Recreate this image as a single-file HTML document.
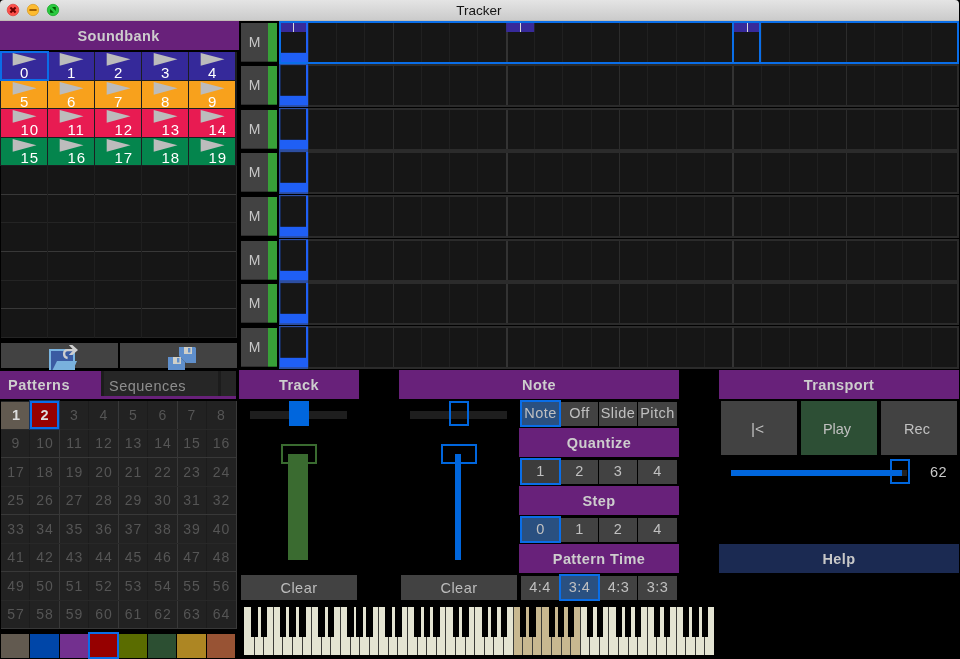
<!DOCTYPE html><html><head><meta charset="utf-8"><style>
html,body{margin:0;padding:0;width:960px;height:659px;overflow:hidden;background:#000;}
.a{position:absolute;box-sizing:border-box;}
.t{font-family:"Liberation Sans",sans-serif;white-space:nowrap;}
</style></head><body><div class="a" style="left:0;top:0;width:960px;height:659px;will-change:transform;background:#000;overflow:hidden">
<div class="a" style="left:0px;top:0px;width:959px;height:21px;background:linear-gradient(#e4e4e4,#cbcbcb);border-bottom:1px solid #c0bcb6;border-top-right-radius:4px;border-top-left-radius:4px;"></div>
<div class="a t" style="left:-1px;top:1px;width:960px;height:20px;line-height:20px;font-size:13.5px;font-weight:normal;color:#151515;text-align:center;">Tracker</div>
<svg class="a" style="left:0;top:0" width="70" height="21">
<circle cx="13" cy="10" r="5.8" fill="#fd4f4b" stroke="#df4540" stroke-width="0.8"/>
<path d="M10.4 7.4 L15.6 12.6 M15.6 7.4 L10.4 12.6" stroke="#6a0000" stroke-width="2.1"/>
<circle cx="33" cy="10" r="5.7" fill="#fdbb2f" stroke="#dd9e24" stroke-width="0.8"/>
<path d="M29.4 10 L36.6 10" stroke="#985600" stroke-width="1.8"/>
<circle cx="53" cy="10" r="5.7" fill="#2ac940" stroke="#1aab2a" stroke-width="0.8"/>
<path d="M52 7.1 L55.8 7.1 L55.8 10.9 Z M50.1 8.9 L50.1 12.8 L53.9 12.8 Z" fill="#035e00"/>
</svg>
<div class="a" style="left:0px;top:21px;width:239px;height:29px;background:#68217a;"></div>
<div class="a t" style="left:0px;top:22px;width:237px;height:29px;line-height:29px;font-size:14.5px;font-weight:bold;color:#cdcdcd;text-align:center;letter-spacing:0.35px;">Soundbank</div>
<div class="a" style="left:0px;top:52px;width:237px;height:114px;background:#1c1e21;"></div>
<div class="a" style="left:1px;top:52px;width:46px;height:28px;background:#35299a;"></div>
<svg class="a" style="left:1px;top:53.3px" width="47" height="14"><path d="M11.7 0 L35.5 6.35 L11.7 12.7 Z" fill="#bcbcbc"/></svg>
<div class="a t" style="left:20px;top:66px;width:30px;height:13px;line-height:13px;font-size:15px;font-weight:normal;color:#ffffff;text-align:left;">0</div>
<div class="a" style="left:48px;top:52px;width:46px;height:28px;background:#35299a;"></div>
<svg class="a" style="left:48px;top:53.3px" width="47" height="14"><path d="M11.7 0 L35.5 6.35 L11.7 12.7 Z" fill="#bcbcbc"/></svg>
<div class="a t" style="left:67px;top:66px;width:30px;height:13px;line-height:13px;font-size:15px;font-weight:normal;color:#ffffff;text-align:left;">1</div>
<div class="a" style="left:95px;top:52px;width:46px;height:28px;background:#35299a;"></div>
<svg class="a" style="left:95px;top:53.3px" width="47" height="14"><path d="M11.7 0 L35.5 6.35 L11.7 12.7 Z" fill="#bcbcbc"/></svg>
<div class="a t" style="left:114px;top:66px;width:30px;height:13px;line-height:13px;font-size:15px;font-weight:normal;color:#ffffff;text-align:left;">2</div>
<div class="a" style="left:142px;top:52px;width:46px;height:28px;background:#35299a;"></div>
<svg class="a" style="left:142px;top:53.3px" width="47" height="14"><path d="M11.7 0 L35.5 6.35 L11.7 12.7 Z" fill="#bcbcbc"/></svg>
<div class="a t" style="left:161px;top:66px;width:30px;height:13px;line-height:13px;font-size:15px;font-weight:normal;color:#ffffff;text-align:left;">3</div>
<div class="a" style="left:189px;top:52px;width:46px;height:28px;background:#35299a;"></div>
<svg class="a" style="left:189px;top:53.3px" width="47" height="14"><path d="M11.7 0 L35.5 6.35 L11.7 12.7 Z" fill="#bcbcbc"/></svg>
<div class="a t" style="left:208px;top:66px;width:30px;height:13px;line-height:13px;font-size:15px;font-weight:normal;color:#ffffff;text-align:left;">4</div>
<div class="a" style="left:1px;top:81px;width:46px;height:27px;background:#f8a11c;"></div>
<svg class="a" style="left:1px;top:81.5px" width="47" height="14"><path d="M11.7 0 L35.5 6.35 L11.7 12.7 Z" fill="#bcbcbc"/></svg>
<div class="a t" style="left:20px;top:94.6px;width:30px;height:13px;line-height:13px;font-size:15px;font-weight:normal;color:#ffffff;text-align:left;">5</div>
<div class="a" style="left:48px;top:81px;width:46px;height:27px;background:#f8a11c;"></div>
<svg class="a" style="left:48px;top:81.5px" width="47" height="14"><path d="M11.7 0 L35.5 6.35 L11.7 12.7 Z" fill="#bcbcbc"/></svg>
<div class="a t" style="left:67px;top:94.6px;width:30px;height:13px;line-height:13px;font-size:15px;font-weight:normal;color:#ffffff;text-align:left;">6</div>
<div class="a" style="left:95px;top:81px;width:46px;height:27px;background:#f8a11c;"></div>
<svg class="a" style="left:95px;top:81.5px" width="47" height="14"><path d="M11.7 0 L35.5 6.35 L11.7 12.7 Z" fill="#bcbcbc"/></svg>
<div class="a t" style="left:114px;top:94.6px;width:30px;height:13px;line-height:13px;font-size:15px;font-weight:normal;color:#ffffff;text-align:left;">7</div>
<div class="a" style="left:142px;top:81px;width:46px;height:27px;background:#f8a11c;"></div>
<svg class="a" style="left:142px;top:81.5px" width="47" height="14"><path d="M11.7 0 L35.5 6.35 L11.7 12.7 Z" fill="#bcbcbc"/></svg>
<div class="a t" style="left:161px;top:94.6px;width:30px;height:13px;line-height:13px;font-size:15px;font-weight:normal;color:#ffffff;text-align:left;">8</div>
<div class="a" style="left:189px;top:81px;width:46px;height:27px;background:#f8a11c;"></div>
<svg class="a" style="left:189px;top:81.5px" width="47" height="14"><path d="M11.7 0 L35.5 6.35 L11.7 12.7 Z" fill="#bcbcbc"/></svg>
<div class="a t" style="left:208px;top:94.6px;width:30px;height:13px;line-height:13px;font-size:15px;font-weight:normal;color:#ffffff;text-align:left;">9</div>
<div class="a" style="left:1px;top:109px;width:46px;height:28px;background:#e81b52;"></div>
<svg class="a" style="left:1px;top:110px" width="47" height="14"><path d="M11.7 0 L35.5 6.35 L11.7 12.7 Z" fill="#bcbcbc"/></svg>
<div class="a t" style="left:20.6px;top:122.7px;width:30px;height:13px;line-height:13px;font-size:15px;font-weight:normal;color:#ffffff;text-align:left;letter-spacing:0.8px;">10</div>
<div class="a" style="left:48px;top:109px;width:46px;height:28px;background:#e81b52;"></div>
<svg class="a" style="left:48px;top:110px" width="47" height="14"><path d="M11.7 0 L35.5 6.35 L11.7 12.7 Z" fill="#bcbcbc"/></svg>
<div class="a t" style="left:67.6px;top:122.7px;width:30px;height:13px;line-height:13px;font-size:15px;font-weight:normal;color:#ffffff;text-align:left;letter-spacing:0.8px;">11</div>
<div class="a" style="left:95px;top:109px;width:46px;height:28px;background:#e81b52;"></div>
<svg class="a" style="left:95px;top:110px" width="47" height="14"><path d="M11.7 0 L35.5 6.35 L11.7 12.7 Z" fill="#bcbcbc"/></svg>
<div class="a t" style="left:114.6px;top:122.7px;width:30px;height:13px;line-height:13px;font-size:15px;font-weight:normal;color:#ffffff;text-align:left;letter-spacing:0.8px;">12</div>
<div class="a" style="left:142px;top:109px;width:46px;height:28px;background:#e81b52;"></div>
<svg class="a" style="left:142px;top:110px" width="47" height="14"><path d="M11.7 0 L35.5 6.35 L11.7 12.7 Z" fill="#bcbcbc"/></svg>
<div class="a t" style="left:161.6px;top:122.7px;width:30px;height:13px;line-height:13px;font-size:15px;font-weight:normal;color:#ffffff;text-align:left;letter-spacing:0.8px;">13</div>
<div class="a" style="left:189px;top:109px;width:46px;height:28px;background:#e81b52;"></div>
<svg class="a" style="left:189px;top:110px" width="47" height="14"><path d="M11.7 0 L35.5 6.35 L11.7 12.7 Z" fill="#bcbcbc"/></svg>
<div class="a t" style="left:208.6px;top:122.7px;width:30px;height:13px;line-height:13px;font-size:15px;font-weight:normal;color:#ffffff;text-align:left;letter-spacing:0.8px;">14</div>
<div class="a" style="left:1px;top:138px;width:46px;height:27px;background:#04854d;"></div>
<svg class="a" style="left:1px;top:138.5px" width="47" height="14"><path d="M11.7 0 L35.5 6.35 L11.7 12.7 Z" fill="#bcbcbc"/></svg>
<div class="a t" style="left:20.6px;top:150.8px;width:30px;height:13px;line-height:13px;font-size:15px;font-weight:normal;color:#ffffff;text-align:left;letter-spacing:0.8px;">15</div>
<div class="a" style="left:48px;top:138px;width:46px;height:27px;background:#04854d;"></div>
<svg class="a" style="left:48px;top:138.5px" width="47" height="14"><path d="M11.7 0 L35.5 6.35 L11.7 12.7 Z" fill="#bcbcbc"/></svg>
<div class="a t" style="left:67.6px;top:150.8px;width:30px;height:13px;line-height:13px;font-size:15px;font-weight:normal;color:#ffffff;text-align:left;letter-spacing:0.8px;">16</div>
<div class="a" style="left:95px;top:138px;width:46px;height:27px;background:#04854d;"></div>
<svg class="a" style="left:95px;top:138.5px" width="47" height="14"><path d="M11.7 0 L35.5 6.35 L11.7 12.7 Z" fill="#bcbcbc"/></svg>
<div class="a t" style="left:114.6px;top:150.8px;width:30px;height:13px;line-height:13px;font-size:15px;font-weight:normal;color:#ffffff;text-align:left;letter-spacing:0.8px;">17</div>
<div class="a" style="left:142px;top:138px;width:46px;height:27px;background:#04854d;"></div>
<svg class="a" style="left:142px;top:138.5px" width="47" height="14"><path d="M11.7 0 L35.5 6.35 L11.7 12.7 Z" fill="#bcbcbc"/></svg>
<div class="a t" style="left:161.6px;top:150.8px;width:30px;height:13px;line-height:13px;font-size:15px;font-weight:normal;color:#ffffff;text-align:left;letter-spacing:0.8px;">18</div>
<div class="a" style="left:189px;top:138px;width:46px;height:27px;background:#04854d;"></div>
<svg class="a" style="left:189px;top:138.5px" width="47" height="14"><path d="M11.7 0 L35.5 6.35 L11.7 12.7 Z" fill="#bcbcbc"/></svg>
<div class="a t" style="left:208.6px;top:150.8px;width:30px;height:13px;line-height:13px;font-size:15px;font-weight:normal;color:#ffffff;text-align:left;letter-spacing:0.8px;">19</div>
<div class="a" style="left:0px;top:51px;width:49px;height:30px;border:2px solid #0a6ee8;"></div>
<div class="a" style="left:1px;top:166px;width:236px;height:172px;background:#161616;"></div>
<div class="a" style="left:1px;top:194px;width:236px;height:1px;background:#383838;"></div>
<div class="a" style="left:1px;top:222px;width:236px;height:1px;background:#242424;"></div>
<div class="a" style="left:1px;top:251px;width:236px;height:1px;background:#383838;"></div>
<div class="a" style="left:1px;top:280px;width:236px;height:1px;background:#242424;"></div>
<div class="a" style="left:1px;top:308px;width:236px;height:1px;background:#383838;"></div>
<div class="a" style="left:1px;top:337px;width:236px;height:1px;background:#242424;"></div>
<div class="a" style="left:47px;top:166px;width:1px;height:172px;background:#1f1f1f;"></div>
<div class="a" style="left:94px;top:166px;width:1px;height:172px;background:#1f1f1f;"></div>
<div class="a" style="left:141px;top:166px;width:1px;height:172px;background:#1f1f1f;"></div>
<div class="a" style="left:188px;top:166px;width:1px;height:172px;background:#1f1f1f;"></div>
<div class="a" style="left:236px;top:166px;width:1px;height:172px;background:#2a2a2a;"></div>
<div class="a" style="left:1px;top:343px;width:117px;height:25px;background:#424242;"></div>
<div class="a" style="left:120px;top:343px;width:117px;height:25px;background:#424242;"></div>
<svg class="a" style="left:40px;top:340px" width="45" height="32">
<rect x="9" y="9" width="26" height="21" fill="#7ab4e0"/>
<rect x="11" y="11" width="22" height="19" fill="#3b5ba2"/>
<path d="M17 21 L37 21 L33 30 L12.5 30 Z" fill="#79b1dd"/>
<path d="M33.5 10.15 L27.5 10.15 C25 10.15 24.1 12 24.1 14 C24.1 16.2 25.5 17.7 27.6 18.0" stroke="#cfcfcf" stroke-width="2.3" fill="none"/>
<path d="M28.8 5 L32.4 5 L38 10 L32.4 14.9 L28.8 14.9 L33.6 10 Z" fill="#cfcfcf"/>
</svg>
<svg class="a" style="left:160px;top:340px" width="45" height="32">
<path d="M19 7 L35 7 L36 8 L36 23 L26 23 L19 16 Z" fill="#5f8fcc"/>
<rect x="24" y="7" width="8" height="7" fill="#cfcfc8"/>
<rect x="28" y="8" width="2.4" height="4.5" fill="#5f8fcc"/>
<path d="M8 17 L20 17 L25 22 L25 30 L8 30 Z" fill="#5f8fcc"/>
<rect x="13" y="17" width="8" height="7" fill="#cfcfc8"/>
<rect x="17" y="18" width="2.4" height="4.5" fill="#5f8fcc"/>
</svg>
<div class="a" style="left:0px;top:371px;width:101px;height:25px;background:#68217a;"></div>
<div class="a t" style="left:8px;top:373px;width:90px;height:25px;line-height:25px;font-size:14.5px;font-weight:bold;color:#cdcdcd;text-align:left;letter-spacing:0.5px;">Patterns</div>
<div class="a" style="left:101px;top:371px;width:3px;height:25px;background:#1c1c1c;"></div>
<div class="a" style="left:104px;top:371px;width:114px;height:25px;background:#262626;"></div>
<div class="a t" style="left:109px;top:374px;width:110px;height:25px;line-height:25px;font-size:14.5px;font-weight:normal;color:#8e8e8e;text-align:left;letter-spacing:0.5px;">Sequences</div>
<div class="a" style="left:218px;top:371px;width:3px;height:25px;background:#1c1c1c;"></div>
<div class="a" style="left:221px;top:371px;width:15px;height:25px;background:#262626;"></div>
<div class="a" style="left:0px;top:396px;width:236px;height:3px;background:#68217a;"></div>
<div class="a" style="left:1px;top:401px;width:236px;height:228px;background:#222222;"></div>
<div class="a" style="left:29px;top:401px;width:1px;height:228px;background:#1c1c1c;"></div>
<div class="a" style="left:59px;top:401px;width:1px;height:228px;background:#383838;"></div>
<div class="a" style="left:88px;top:401px;width:1px;height:228px;background:#1c1c1c;"></div>
<div class="a" style="left:118px;top:401px;width:1px;height:228px;background:#383838;"></div>
<div class="a" style="left:147px;top:401px;width:1px;height:228px;background:#1c1c1c;"></div>
<div class="a" style="left:177px;top:401px;width:1px;height:228px;background:#383838;"></div>
<div class="a" style="left:206px;top:401px;width:1px;height:228px;background:#1c1c1c;"></div>
<div class="a" style="left:1px;top:429px;width:236px;height:1px;background:#282828;"></div>
<div class="a" style="left:1px;top:457px;width:236px;height:1px;background:#383838;"></div>
<div class="a" style="left:1px;top:486px;width:236px;height:1px;background:#282828;"></div>
<div class="a" style="left:1px;top:514px;width:236px;height:1px;background:#383838;"></div>
<div class="a" style="left:1px;top:543px;width:236px;height:1px;background:#282828;"></div>
<div class="a" style="left:1px;top:571px;width:236px;height:1px;background:#383838;"></div>
<div class="a" style="left:1px;top:600px;width:236px;height:1px;background:#282828;"></div>
<div class="a" style="left:1px;top:628px;width:236px;height:1px;background:#383838;"></div>
<div class="a" style="left:236px;top:401px;width:1px;height:228px;background:#3a3a3a;"></div>
<div class="a" style="left:1px;top:402px;width:28px;height:27px;background:#625a50;"></div>
<div class="a t" style="left:2px;top:401px;width:28px;height:28px;line-height:28px;font-size:14.5px;font-weight:bold;color:#dedede;text-align:center;">1</div>
<div class="a" style="left:29px;top:400px;width:31px;height:30px;border:1px solid #163560;"></div>
<div class="a" style="left:30px;top:401px;width:29px;height:28px;background:#960000;border:2.5px solid #0a6ee8;"></div>
<div class="a t" style="left:30px;top:401px;width:29px;height:28px;line-height:28px;font-size:14.5px;font-weight:bold;color:#dedede;text-align:center;">2</div>
<div class="a t" style="left:59px;top:400.5px;width:30px;height:28.5px;line-height:28.5px;font-size:14px;font-weight:normal;color:#555555;text-align:center;">3</div>
<div class="a t" style="left:89px;top:400.5px;width:29px;height:28.5px;line-height:28.5px;font-size:14px;font-weight:normal;color:#555555;text-align:center;">4</div>
<div class="a t" style="left:118px;top:400.5px;width:30px;height:28.5px;line-height:28.5px;font-size:14px;font-weight:normal;color:#555555;text-align:center;">5</div>
<div class="a t" style="left:148px;top:400.5px;width:29px;height:28.5px;line-height:28.5px;font-size:14px;font-weight:normal;color:#555555;text-align:center;">6</div>
<div class="a t" style="left:177px;top:400.5px;width:29px;height:28.5px;line-height:28.5px;font-size:14px;font-weight:normal;color:#555555;text-align:center;">7</div>
<div class="a t" style="left:206px;top:400.5px;width:30px;height:28.5px;line-height:28.5px;font-size:14px;font-weight:normal;color:#555555;text-align:center;">8</div>
<div class="a t" style="left:1px;top:429.0px;width:29px;height:28.5px;line-height:28.5px;font-size:14px;font-weight:normal;color:#555555;text-align:center;">9</div>
<div class="a t" style="left:30.5px;top:429.0px;width:29px;height:28.5px;line-height:28.5px;font-size:14px;font-weight:normal;color:#555555;text-align:center;letter-spacing:1px;">10</div>
<div class="a t" style="left:59.5px;top:429.0px;width:30px;height:28.5px;line-height:28.5px;font-size:14px;font-weight:normal;color:#555555;text-align:center;letter-spacing:1px;">11</div>
<div class="a t" style="left:89.5px;top:429.0px;width:29px;height:28.5px;line-height:28.5px;font-size:14px;font-weight:normal;color:#555555;text-align:center;letter-spacing:1px;">12</div>
<div class="a t" style="left:118.5px;top:429.0px;width:30px;height:28.5px;line-height:28.5px;font-size:14px;font-weight:normal;color:#555555;text-align:center;letter-spacing:1px;">13</div>
<div class="a t" style="left:148.5px;top:429.0px;width:29px;height:28.5px;line-height:28.5px;font-size:14px;font-weight:normal;color:#555555;text-align:center;letter-spacing:1px;">14</div>
<div class="a t" style="left:177.5px;top:429.0px;width:29px;height:28.5px;line-height:28.5px;font-size:14px;font-weight:normal;color:#555555;text-align:center;letter-spacing:1px;">15</div>
<div class="a t" style="left:206.5px;top:429.0px;width:30px;height:28.5px;line-height:28.5px;font-size:14px;font-weight:normal;color:#555555;text-align:center;letter-spacing:1px;">16</div>
<div class="a t" style="left:1.5px;top:457.5px;width:29px;height:28.5px;line-height:28.5px;font-size:14px;font-weight:normal;color:#555555;text-align:center;letter-spacing:1px;">17</div>
<div class="a t" style="left:30.5px;top:457.5px;width:29px;height:28.5px;line-height:28.5px;font-size:14px;font-weight:normal;color:#555555;text-align:center;letter-spacing:1px;">18</div>
<div class="a t" style="left:59.5px;top:457.5px;width:30px;height:28.5px;line-height:28.5px;font-size:14px;font-weight:normal;color:#555555;text-align:center;letter-spacing:1px;">19</div>
<div class="a t" style="left:89.5px;top:457.5px;width:29px;height:28.5px;line-height:28.5px;font-size:14px;font-weight:normal;color:#555555;text-align:center;letter-spacing:1px;">20</div>
<div class="a t" style="left:118.5px;top:457.5px;width:30px;height:28.5px;line-height:28.5px;font-size:14px;font-weight:normal;color:#555555;text-align:center;letter-spacing:1px;">21</div>
<div class="a t" style="left:148.5px;top:457.5px;width:29px;height:28.5px;line-height:28.5px;font-size:14px;font-weight:normal;color:#555555;text-align:center;letter-spacing:1px;">22</div>
<div class="a t" style="left:177.5px;top:457.5px;width:29px;height:28.5px;line-height:28.5px;font-size:14px;font-weight:normal;color:#555555;text-align:center;letter-spacing:1px;">23</div>
<div class="a t" style="left:206.5px;top:457.5px;width:30px;height:28.5px;line-height:28.5px;font-size:14px;font-weight:normal;color:#555555;text-align:center;letter-spacing:1px;">24</div>
<div class="a t" style="left:1.5px;top:486.0px;width:29px;height:28.5px;line-height:28.5px;font-size:14px;font-weight:normal;color:#555555;text-align:center;letter-spacing:1px;">25</div>
<div class="a t" style="left:30.5px;top:486.0px;width:29px;height:28.5px;line-height:28.5px;font-size:14px;font-weight:normal;color:#555555;text-align:center;letter-spacing:1px;">26</div>
<div class="a t" style="left:59.5px;top:486.0px;width:30px;height:28.5px;line-height:28.5px;font-size:14px;font-weight:normal;color:#555555;text-align:center;letter-spacing:1px;">27</div>
<div class="a t" style="left:89.5px;top:486.0px;width:29px;height:28.5px;line-height:28.5px;font-size:14px;font-weight:normal;color:#555555;text-align:center;letter-spacing:1px;">28</div>
<div class="a t" style="left:118.5px;top:486.0px;width:30px;height:28.5px;line-height:28.5px;font-size:14px;font-weight:normal;color:#555555;text-align:center;letter-spacing:1px;">29</div>
<div class="a t" style="left:148.5px;top:486.0px;width:29px;height:28.5px;line-height:28.5px;font-size:14px;font-weight:normal;color:#555555;text-align:center;letter-spacing:1px;">30</div>
<div class="a t" style="left:177.5px;top:486.0px;width:29px;height:28.5px;line-height:28.5px;font-size:14px;font-weight:normal;color:#555555;text-align:center;letter-spacing:1px;">31</div>
<div class="a t" style="left:206.5px;top:486.0px;width:30px;height:28.5px;line-height:28.5px;font-size:14px;font-weight:normal;color:#555555;text-align:center;letter-spacing:1px;">32</div>
<div class="a t" style="left:1.5px;top:514.5px;width:29px;height:28.5px;line-height:28.5px;font-size:14px;font-weight:normal;color:#555555;text-align:center;letter-spacing:1px;">33</div>
<div class="a t" style="left:30.5px;top:514.5px;width:29px;height:28.5px;line-height:28.5px;font-size:14px;font-weight:normal;color:#555555;text-align:center;letter-spacing:1px;">34</div>
<div class="a t" style="left:59.5px;top:514.5px;width:30px;height:28.5px;line-height:28.5px;font-size:14px;font-weight:normal;color:#555555;text-align:center;letter-spacing:1px;">35</div>
<div class="a t" style="left:89.5px;top:514.5px;width:29px;height:28.5px;line-height:28.5px;font-size:14px;font-weight:normal;color:#555555;text-align:center;letter-spacing:1px;">36</div>
<div class="a t" style="left:118.5px;top:514.5px;width:30px;height:28.5px;line-height:28.5px;font-size:14px;font-weight:normal;color:#555555;text-align:center;letter-spacing:1px;">37</div>
<div class="a t" style="left:148.5px;top:514.5px;width:29px;height:28.5px;line-height:28.5px;font-size:14px;font-weight:normal;color:#555555;text-align:center;letter-spacing:1px;">38</div>
<div class="a t" style="left:177.5px;top:514.5px;width:29px;height:28.5px;line-height:28.5px;font-size:14px;font-weight:normal;color:#555555;text-align:center;letter-spacing:1px;">39</div>
<div class="a t" style="left:206.5px;top:514.5px;width:30px;height:28.5px;line-height:28.5px;font-size:14px;font-weight:normal;color:#555555;text-align:center;letter-spacing:1px;">40</div>
<div class="a t" style="left:1.5px;top:543.0px;width:29px;height:28.5px;line-height:28.5px;font-size:14px;font-weight:normal;color:#555555;text-align:center;letter-spacing:1px;">41</div>
<div class="a t" style="left:30.5px;top:543.0px;width:29px;height:28.5px;line-height:28.5px;font-size:14px;font-weight:normal;color:#555555;text-align:center;letter-spacing:1px;">42</div>
<div class="a t" style="left:59.5px;top:543.0px;width:30px;height:28.5px;line-height:28.5px;font-size:14px;font-weight:normal;color:#555555;text-align:center;letter-spacing:1px;">43</div>
<div class="a t" style="left:89.5px;top:543.0px;width:29px;height:28.5px;line-height:28.5px;font-size:14px;font-weight:normal;color:#555555;text-align:center;letter-spacing:1px;">44</div>
<div class="a t" style="left:118.5px;top:543.0px;width:30px;height:28.5px;line-height:28.5px;font-size:14px;font-weight:normal;color:#555555;text-align:center;letter-spacing:1px;">45</div>
<div class="a t" style="left:148.5px;top:543.0px;width:29px;height:28.5px;line-height:28.5px;font-size:14px;font-weight:normal;color:#555555;text-align:center;letter-spacing:1px;">46</div>
<div class="a t" style="left:177.5px;top:543.0px;width:29px;height:28.5px;line-height:28.5px;font-size:14px;font-weight:normal;color:#555555;text-align:center;letter-spacing:1px;">47</div>
<div class="a t" style="left:206.5px;top:543.0px;width:30px;height:28.5px;line-height:28.5px;font-size:14px;font-weight:normal;color:#555555;text-align:center;letter-spacing:1px;">48</div>
<div class="a t" style="left:1.5px;top:571.5px;width:29px;height:28.5px;line-height:28.5px;font-size:14px;font-weight:normal;color:#555555;text-align:center;letter-spacing:1px;">49</div>
<div class="a t" style="left:30.5px;top:571.5px;width:29px;height:28.5px;line-height:28.5px;font-size:14px;font-weight:normal;color:#555555;text-align:center;letter-spacing:1px;">50</div>
<div class="a t" style="left:59.5px;top:571.5px;width:30px;height:28.5px;line-height:28.5px;font-size:14px;font-weight:normal;color:#555555;text-align:center;letter-spacing:1px;">51</div>
<div class="a t" style="left:89.5px;top:571.5px;width:29px;height:28.5px;line-height:28.5px;font-size:14px;font-weight:normal;color:#555555;text-align:center;letter-spacing:1px;">52</div>
<div class="a t" style="left:118.5px;top:571.5px;width:30px;height:28.5px;line-height:28.5px;font-size:14px;font-weight:normal;color:#555555;text-align:center;letter-spacing:1px;">53</div>
<div class="a t" style="left:148.5px;top:571.5px;width:29px;height:28.5px;line-height:28.5px;font-size:14px;font-weight:normal;color:#555555;text-align:center;letter-spacing:1px;">54</div>
<div class="a t" style="left:177.5px;top:571.5px;width:29px;height:28.5px;line-height:28.5px;font-size:14px;font-weight:normal;color:#555555;text-align:center;letter-spacing:1px;">55</div>
<div class="a t" style="left:206.5px;top:571.5px;width:30px;height:28.5px;line-height:28.5px;font-size:14px;font-weight:normal;color:#555555;text-align:center;letter-spacing:1px;">56</div>
<div class="a t" style="left:1.5px;top:600.0px;width:29px;height:28.5px;line-height:28.5px;font-size:14px;font-weight:normal;color:#555555;text-align:center;letter-spacing:1px;">57</div>
<div class="a t" style="left:30.5px;top:600.0px;width:29px;height:28.5px;line-height:28.5px;font-size:14px;font-weight:normal;color:#555555;text-align:center;letter-spacing:1px;">58</div>
<div class="a t" style="left:59.5px;top:600.0px;width:30px;height:28.5px;line-height:28.5px;font-size:14px;font-weight:normal;color:#555555;text-align:center;letter-spacing:1px;">59</div>
<div class="a t" style="left:89.5px;top:600.0px;width:29px;height:28.5px;line-height:28.5px;font-size:14px;font-weight:normal;color:#555555;text-align:center;letter-spacing:1px;">60</div>
<div class="a t" style="left:118.5px;top:600.0px;width:30px;height:28.5px;line-height:28.5px;font-size:14px;font-weight:normal;color:#555555;text-align:center;letter-spacing:1px;">61</div>
<div class="a t" style="left:148.5px;top:600.0px;width:29px;height:28.5px;line-height:28.5px;font-size:14px;font-weight:normal;color:#555555;text-align:center;letter-spacing:1px;">62</div>
<div class="a t" style="left:177.5px;top:600.0px;width:29px;height:28.5px;line-height:28.5px;font-size:14px;font-weight:normal;color:#555555;text-align:center;letter-spacing:1px;">63</div>
<div class="a t" style="left:206.5px;top:600.0px;width:30px;height:28.5px;line-height:28.5px;font-size:14px;font-weight:normal;color:#555555;text-align:center;letter-spacing:1px;">64</div>
<div class="a" style="left:1px;top:634px;width:28px;height:24px;background:#625a50;"></div>
<div class="a" style="left:30px;top:634px;width:29px;height:24px;background:#0046a8;"></div>
<div class="a" style="left:60px;top:634px;width:28px;height:24px;background:#73308f;"></div>
<div class="a" style="left:89px;top:634px;width:29px;height:24px;background:#960000;"></div>
<div class="a" style="left:119px;top:634px;width:28px;height:24px;background:#5a6c00;"></div>
<div class="a" style="left:148px;top:634px;width:28px;height:24px;background:#2c4f32;"></div>
<div class="a" style="left:177px;top:634px;width:29px;height:24px;background:#ad8623;"></div>
<div class="a" style="left:207px;top:634px;width:28px;height:24px;background:#985334;"></div>
<div class="a" style="left:88px;top:632px;width:31px;height:27px;border:2px solid #0a6ee8;"></div>
<svg class="a" style="left:0;top:0" width="960" height="372">
<rect x="241" y="23" width="27" height="38.7" fill="#424242"/>
<rect x="268" y="23" width="9" height="38.7" fill="#38a038"/>
<rect x="279" y="21" width="680" height="43" fill="#2b2b2b"/>
<rect x="281" y="23" width="676" height="39" fill="#161616"/>
<rect x="308" y="23" width="1" height="39" fill="#202020"/>
<rect x="336" y="23" width="1" height="39" fill="#202020"/>
<rect x="364" y="23" width="1" height="39" fill="#202020"/>
<rect x="393" y="23" width="1" height="39" fill="#2c2c2c"/>
<rect x="421" y="23" width="1" height="39" fill="#202020"/>
<rect x="449" y="23" width="1" height="39" fill="#202020"/>
<rect x="477" y="23" width="1" height="39" fill="#202020"/>
<rect x="506" y="23" width="2" height="39" fill="#333"/>
<rect x="534" y="23" width="1" height="39" fill="#202020"/>
<rect x="562" y="23" width="1" height="39" fill="#202020"/>
<rect x="591" y="23" width="1" height="39" fill="#202020"/>
<rect x="619" y="23" width="1" height="39" fill="#2c2c2c"/>
<rect x="647" y="23" width="1" height="39" fill="#202020"/>
<rect x="676" y="23" width="1" height="39" fill="#202020"/>
<rect x="704" y="23" width="1" height="39" fill="#202020"/>
<rect x="732" y="23" width="2" height="39" fill="#333"/>
<rect x="761" y="23" width="1" height="39" fill="#202020"/>
<rect x="789" y="23" width="1" height="39" fill="#202020"/>
<rect x="817" y="23" width="1" height="39" fill="#202020"/>
<rect x="846" y="23" width="1" height="39" fill="#2c2c2c"/>
<rect x="874" y="23" width="1" height="39" fill="#202020"/>
<rect x="902" y="23" width="1" height="39" fill="#202020"/>
<rect x="931" y="23" width="1" height="39" fill="#202020"/>
<rect x="279" y="21" width="29.1" height="43" fill="#2d4ea0"/>
<rect x="280" y="22" width="28.1" height="40.2" fill="#1f5ff5"/>
<rect x="280.3" y="22.1" width="25.7" height="30.7" fill="#161616"/>
<rect x="241" y="66" width="27" height="38.7" fill="#424242"/>
<rect x="268" y="66" width="9" height="38.7" fill="#38a038"/>
<rect x="279" y="64" width="680" height="43" fill="#2b2b2b"/>
<rect x="281" y="66" width="676" height="39" fill="#161616"/>
<rect x="308" y="66" width="1" height="39" fill="#202020"/>
<rect x="336" y="66" width="1" height="39" fill="#202020"/>
<rect x="364" y="66" width="1" height="39" fill="#202020"/>
<rect x="393" y="66" width="1" height="39" fill="#2c2c2c"/>
<rect x="421" y="66" width="1" height="39" fill="#202020"/>
<rect x="449" y="66" width="1" height="39" fill="#202020"/>
<rect x="477" y="66" width="1" height="39" fill="#202020"/>
<rect x="506" y="66" width="2" height="39" fill="#333"/>
<rect x="534" y="66" width="1" height="39" fill="#202020"/>
<rect x="562" y="66" width="1" height="39" fill="#202020"/>
<rect x="591" y="66" width="1" height="39" fill="#202020"/>
<rect x="619" y="66" width="1" height="39" fill="#2c2c2c"/>
<rect x="647" y="66" width="1" height="39" fill="#202020"/>
<rect x="676" y="66" width="1" height="39" fill="#202020"/>
<rect x="704" y="66" width="1" height="39" fill="#202020"/>
<rect x="732" y="66" width="2" height="39" fill="#333"/>
<rect x="761" y="66" width="1" height="39" fill="#202020"/>
<rect x="789" y="66" width="1" height="39" fill="#202020"/>
<rect x="817" y="66" width="1" height="39" fill="#202020"/>
<rect x="846" y="66" width="1" height="39" fill="#2c2c2c"/>
<rect x="874" y="66" width="1" height="39" fill="#202020"/>
<rect x="902" y="66" width="1" height="39" fill="#202020"/>
<rect x="931" y="66" width="1" height="39" fill="#202020"/>
<rect x="279" y="64" width="29.1" height="43" fill="#2d4ea0"/>
<rect x="280" y="65" width="28.1" height="40.2" fill="#1f5ff5"/>
<rect x="280.3" y="65.1" width="25.7" height="30.7" fill="#161616"/>
<rect x="241" y="110" width="27" height="38.7" fill="#424242"/>
<rect x="268" y="110" width="9" height="38.7" fill="#38a038"/>
<rect x="279" y="108" width="680" height="43" fill="#2b2b2b"/>
<rect x="281" y="110" width="676" height="39" fill="#161616"/>
<rect x="308" y="110" width="1" height="39" fill="#202020"/>
<rect x="336" y="110" width="1" height="39" fill="#202020"/>
<rect x="364" y="110" width="1" height="39" fill="#202020"/>
<rect x="393" y="110" width="1" height="39" fill="#2c2c2c"/>
<rect x="421" y="110" width="1" height="39" fill="#202020"/>
<rect x="449" y="110" width="1" height="39" fill="#202020"/>
<rect x="477" y="110" width="1" height="39" fill="#202020"/>
<rect x="506" y="110" width="2" height="39" fill="#333"/>
<rect x="534" y="110" width="1" height="39" fill="#202020"/>
<rect x="562" y="110" width="1" height="39" fill="#202020"/>
<rect x="591" y="110" width="1" height="39" fill="#202020"/>
<rect x="619" y="110" width="1" height="39" fill="#2c2c2c"/>
<rect x="647" y="110" width="1" height="39" fill="#202020"/>
<rect x="676" y="110" width="1" height="39" fill="#202020"/>
<rect x="704" y="110" width="1" height="39" fill="#202020"/>
<rect x="732" y="110" width="2" height="39" fill="#333"/>
<rect x="761" y="110" width="1" height="39" fill="#202020"/>
<rect x="789" y="110" width="1" height="39" fill="#202020"/>
<rect x="817" y="110" width="1" height="39" fill="#202020"/>
<rect x="846" y="110" width="1" height="39" fill="#2c2c2c"/>
<rect x="874" y="110" width="1" height="39" fill="#202020"/>
<rect x="902" y="110" width="1" height="39" fill="#202020"/>
<rect x="931" y="110" width="1" height="39" fill="#202020"/>
<rect x="279" y="108" width="29.1" height="43" fill="#2d4ea0"/>
<rect x="280" y="109" width="28.1" height="40.2" fill="#1f5ff5"/>
<rect x="280.3" y="109.1" width="25.7" height="30.7" fill="#161616"/>
<rect x="241" y="153" width="27" height="38.7" fill="#424242"/>
<rect x="268" y="153" width="9" height="38.7" fill="#38a038"/>
<rect x="279" y="151" width="680" height="43" fill="#2b2b2b"/>
<rect x="281" y="153" width="676" height="39" fill="#161616"/>
<rect x="308" y="153" width="1" height="39" fill="#202020"/>
<rect x="336" y="153" width="1" height="39" fill="#202020"/>
<rect x="364" y="153" width="1" height="39" fill="#202020"/>
<rect x="393" y="153" width="1" height="39" fill="#2c2c2c"/>
<rect x="421" y="153" width="1" height="39" fill="#202020"/>
<rect x="449" y="153" width="1" height="39" fill="#202020"/>
<rect x="477" y="153" width="1" height="39" fill="#202020"/>
<rect x="506" y="153" width="2" height="39" fill="#333"/>
<rect x="534" y="153" width="1" height="39" fill="#202020"/>
<rect x="562" y="153" width="1" height="39" fill="#202020"/>
<rect x="591" y="153" width="1" height="39" fill="#202020"/>
<rect x="619" y="153" width="1" height="39" fill="#2c2c2c"/>
<rect x="647" y="153" width="1" height="39" fill="#202020"/>
<rect x="676" y="153" width="1" height="39" fill="#202020"/>
<rect x="704" y="153" width="1" height="39" fill="#202020"/>
<rect x="732" y="153" width="2" height="39" fill="#333"/>
<rect x="761" y="153" width="1" height="39" fill="#202020"/>
<rect x="789" y="153" width="1" height="39" fill="#202020"/>
<rect x="817" y="153" width="1" height="39" fill="#202020"/>
<rect x="846" y="153" width="1" height="39" fill="#2c2c2c"/>
<rect x="874" y="153" width="1" height="39" fill="#202020"/>
<rect x="902" y="153" width="1" height="39" fill="#202020"/>
<rect x="931" y="153" width="1" height="39" fill="#202020"/>
<rect x="279" y="151" width="29.1" height="43" fill="#2d4ea0"/>
<rect x="280" y="152" width="28.1" height="40.2" fill="#1f5ff5"/>
<rect x="280.3" y="152.1" width="25.7" height="30.7" fill="#161616"/>
<rect x="241" y="197" width="27" height="38.7" fill="#424242"/>
<rect x="268" y="197" width="9" height="38.7" fill="#38a038"/>
<rect x="279" y="195" width="680" height="43" fill="#2b2b2b"/>
<rect x="281" y="197" width="676" height="39" fill="#161616"/>
<rect x="308" y="197" width="1" height="39" fill="#202020"/>
<rect x="336" y="197" width="1" height="39" fill="#202020"/>
<rect x="364" y="197" width="1" height="39" fill="#202020"/>
<rect x="393" y="197" width="1" height="39" fill="#2c2c2c"/>
<rect x="421" y="197" width="1" height="39" fill="#202020"/>
<rect x="449" y="197" width="1" height="39" fill="#202020"/>
<rect x="477" y="197" width="1" height="39" fill="#202020"/>
<rect x="506" y="197" width="2" height="39" fill="#333"/>
<rect x="534" y="197" width="1" height="39" fill="#202020"/>
<rect x="562" y="197" width="1" height="39" fill="#202020"/>
<rect x="591" y="197" width="1" height="39" fill="#202020"/>
<rect x="619" y="197" width="1" height="39" fill="#2c2c2c"/>
<rect x="647" y="197" width="1" height="39" fill="#202020"/>
<rect x="676" y="197" width="1" height="39" fill="#202020"/>
<rect x="704" y="197" width="1" height="39" fill="#202020"/>
<rect x="732" y="197" width="2" height="39" fill="#333"/>
<rect x="761" y="197" width="1" height="39" fill="#202020"/>
<rect x="789" y="197" width="1" height="39" fill="#202020"/>
<rect x="817" y="197" width="1" height="39" fill="#202020"/>
<rect x="846" y="197" width="1" height="39" fill="#2c2c2c"/>
<rect x="874" y="197" width="1" height="39" fill="#202020"/>
<rect x="902" y="197" width="1" height="39" fill="#202020"/>
<rect x="931" y="197" width="1" height="39" fill="#202020"/>
<rect x="279" y="195" width="29.1" height="43" fill="#2d4ea0"/>
<rect x="280" y="196" width="28.1" height="40.2" fill="#1f5ff5"/>
<rect x="280.3" y="196.1" width="25.7" height="30.7" fill="#161616"/>
<rect x="241" y="241" width="27" height="38.7" fill="#424242"/>
<rect x="268" y="241" width="9" height="38.7" fill="#38a038"/>
<rect x="279" y="239" width="680" height="43" fill="#2b2b2b"/>
<rect x="281" y="241" width="676" height="39" fill="#161616"/>
<rect x="308" y="241" width="1" height="39" fill="#202020"/>
<rect x="336" y="241" width="1" height="39" fill="#202020"/>
<rect x="364" y="241" width="1" height="39" fill="#202020"/>
<rect x="393" y="241" width="1" height="39" fill="#2c2c2c"/>
<rect x="421" y="241" width="1" height="39" fill="#202020"/>
<rect x="449" y="241" width="1" height="39" fill="#202020"/>
<rect x="477" y="241" width="1" height="39" fill="#202020"/>
<rect x="506" y="241" width="2" height="39" fill="#333"/>
<rect x="534" y="241" width="1" height="39" fill="#202020"/>
<rect x="562" y="241" width="1" height="39" fill="#202020"/>
<rect x="591" y="241" width="1" height="39" fill="#202020"/>
<rect x="619" y="241" width="1" height="39" fill="#2c2c2c"/>
<rect x="647" y="241" width="1" height="39" fill="#202020"/>
<rect x="676" y="241" width="1" height="39" fill="#202020"/>
<rect x="704" y="241" width="1" height="39" fill="#202020"/>
<rect x="732" y="241" width="2" height="39" fill="#333"/>
<rect x="761" y="241" width="1" height="39" fill="#202020"/>
<rect x="789" y="241" width="1" height="39" fill="#202020"/>
<rect x="817" y="241" width="1" height="39" fill="#202020"/>
<rect x="846" y="241" width="1" height="39" fill="#2c2c2c"/>
<rect x="874" y="241" width="1" height="39" fill="#202020"/>
<rect x="902" y="241" width="1" height="39" fill="#202020"/>
<rect x="931" y="241" width="1" height="39" fill="#202020"/>
<rect x="279" y="239" width="29.1" height="43" fill="#2d4ea0"/>
<rect x="280" y="240" width="28.1" height="40.2" fill="#1f5ff5"/>
<rect x="280.3" y="240.1" width="25.7" height="30.7" fill="#161616"/>
<rect x="241" y="284" width="27" height="38.7" fill="#424242"/>
<rect x="268" y="284" width="9" height="38.7" fill="#38a038"/>
<rect x="279" y="282" width="680" height="43" fill="#2b2b2b"/>
<rect x="281" y="284" width="676" height="39" fill="#161616"/>
<rect x="308" y="284" width="1" height="39" fill="#202020"/>
<rect x="336" y="284" width="1" height="39" fill="#202020"/>
<rect x="364" y="284" width="1" height="39" fill="#202020"/>
<rect x="393" y="284" width="1" height="39" fill="#2c2c2c"/>
<rect x="421" y="284" width="1" height="39" fill="#202020"/>
<rect x="449" y="284" width="1" height="39" fill="#202020"/>
<rect x="477" y="284" width="1" height="39" fill="#202020"/>
<rect x="506" y="284" width="2" height="39" fill="#333"/>
<rect x="534" y="284" width="1" height="39" fill="#202020"/>
<rect x="562" y="284" width="1" height="39" fill="#202020"/>
<rect x="591" y="284" width="1" height="39" fill="#202020"/>
<rect x="619" y="284" width="1" height="39" fill="#2c2c2c"/>
<rect x="647" y="284" width="1" height="39" fill="#202020"/>
<rect x="676" y="284" width="1" height="39" fill="#202020"/>
<rect x="704" y="284" width="1" height="39" fill="#202020"/>
<rect x="732" y="284" width="2" height="39" fill="#333"/>
<rect x="761" y="284" width="1" height="39" fill="#202020"/>
<rect x="789" y="284" width="1" height="39" fill="#202020"/>
<rect x="817" y="284" width="1" height="39" fill="#202020"/>
<rect x="846" y="284" width="1" height="39" fill="#2c2c2c"/>
<rect x="874" y="284" width="1" height="39" fill="#202020"/>
<rect x="902" y="284" width="1" height="39" fill="#202020"/>
<rect x="931" y="284" width="1" height="39" fill="#202020"/>
<rect x="279" y="282" width="29.1" height="43" fill="#2d4ea0"/>
<rect x="280" y="283" width="28.1" height="40.2" fill="#1f5ff5"/>
<rect x="280.3" y="283.1" width="25.7" height="30.7" fill="#161616"/>
<rect x="241" y="328" width="27" height="38.7" fill="#424242"/>
<rect x="268" y="328" width="9" height="38.7" fill="#38a038"/>
<rect x="279" y="326" width="680" height="43" fill="#2b2b2b"/>
<rect x="281" y="328" width="676" height="39" fill="#161616"/>
<rect x="308" y="328" width="1" height="39" fill="#202020"/>
<rect x="336" y="328" width="1" height="39" fill="#202020"/>
<rect x="364" y="328" width="1" height="39" fill="#202020"/>
<rect x="393" y="328" width="1" height="39" fill="#2c2c2c"/>
<rect x="421" y="328" width="1" height="39" fill="#202020"/>
<rect x="449" y="328" width="1" height="39" fill="#202020"/>
<rect x="477" y="328" width="1" height="39" fill="#202020"/>
<rect x="506" y="328" width="2" height="39" fill="#333"/>
<rect x="534" y="328" width="1" height="39" fill="#202020"/>
<rect x="562" y="328" width="1" height="39" fill="#202020"/>
<rect x="591" y="328" width="1" height="39" fill="#202020"/>
<rect x="619" y="328" width="1" height="39" fill="#2c2c2c"/>
<rect x="647" y="328" width="1" height="39" fill="#202020"/>
<rect x="676" y="328" width="1" height="39" fill="#202020"/>
<rect x="704" y="328" width="1" height="39" fill="#202020"/>
<rect x="732" y="328" width="2" height="39" fill="#333"/>
<rect x="761" y="328" width="1" height="39" fill="#202020"/>
<rect x="789" y="328" width="1" height="39" fill="#202020"/>
<rect x="817" y="328" width="1" height="39" fill="#202020"/>
<rect x="846" y="328" width="1" height="39" fill="#2c2c2c"/>
<rect x="874" y="328" width="1" height="39" fill="#202020"/>
<rect x="902" y="328" width="1" height="39" fill="#202020"/>
<rect x="931" y="328" width="1" height="39" fill="#202020"/>
<rect x="279" y="326" width="29.1" height="43" fill="#2d4ea0"/>
<rect x="280" y="327" width="28.1" height="40.2" fill="#1f5ff5"/>
<rect x="280.3" y="327.1" width="25.7" height="30.7" fill="#161616"/>
<rect x="281" y="23" width="25" height="9" fill="#372a9a"/>
<rect x="293" y="23" width="1" height="9" fill="#d8d8d8"/>
<rect x="506.2" y="23" width="28" height="9" fill="#372a9a"/>
<rect x="520" y="23" width="1" height="9" fill="#d8d8d8"/>
<rect x="734" y="23" width="25" height="9" fill="#372a9a"/>
<rect x="747" y="23" width="1" height="9" fill="#d8d8d8"/>
<rect x="732" y="21" width="2" height="43" fill="#0a6ee8"/>
<rect x="759" y="21" width="2" height="43" fill="#0a6ee8"/>
<rect x="280" y="22" width="678" height="41" fill="none" stroke="#0a6ee8" stroke-width="2" />
</svg>
<div class="a t" style="left:241px;top:23px;width:27px;height:39px;line-height:39px;font-size:14px;font-weight:normal;color:#c8c8c8;text-align:center;">M</div>
<div class="a t" style="left:241px;top:66px;width:27px;height:39px;line-height:39px;font-size:14px;font-weight:normal;color:#c8c8c8;text-align:center;">M</div>
<div class="a t" style="left:241px;top:110px;width:27px;height:39px;line-height:39px;font-size:14px;font-weight:normal;color:#c8c8c8;text-align:center;">M</div>
<div class="a t" style="left:241px;top:153px;width:27px;height:39px;line-height:39px;font-size:14px;font-weight:normal;color:#c8c8c8;text-align:center;">M</div>
<div class="a t" style="left:241px;top:197px;width:27px;height:39px;line-height:39px;font-size:14px;font-weight:normal;color:#c8c8c8;text-align:center;">M</div>
<div class="a t" style="left:241px;top:241px;width:27px;height:39px;line-height:39px;font-size:14px;font-weight:normal;color:#c8c8c8;text-align:center;">M</div>
<div class="a t" style="left:241px;top:284px;width:27px;height:39px;line-height:39px;font-size:14px;font-weight:normal;color:#c8c8c8;text-align:center;">M</div>
<div class="a t" style="left:241px;top:328px;width:27px;height:39px;line-height:39px;font-size:14px;font-weight:normal;color:#c8c8c8;text-align:center;">M</div>
<div class="a" style="left:239px;top:370px;width:120px;height:29px;background:#68217a;"></div>
<div class="a t" style="left:239px;top:371px;width:120px;height:29px;line-height:29px;font-size:14.5px;font-weight:bold;color:#cdcdcd;text-align:center;letter-spacing:0.4px;">Track</div>
<div class="a" style="left:399px;top:370px;width:280px;height:29px;background:#68217a;"></div>
<div class="a t" style="left:399px;top:371px;width:280px;height:29px;line-height:29px;font-size:14.5px;font-weight:bold;color:#cdcdcd;text-align:center;letter-spacing:0.4px;">Note</div>
<div class="a" style="left:719px;top:370px;width:240px;height:29px;background:#68217a;"></div>
<div class="a t" style="left:719px;top:371px;width:240px;height:29px;line-height:29px;font-size:14.5px;font-weight:bold;color:#cdcdcd;text-align:center;letter-spacing:0.4px;">Transport</div>
<div class="a" style="left:250px;top:411px;width:97px;height:8px;background:#1e1e1e;"></div>
<div class="a" style="left:289px;top:401px;width:20px;height:25px;background:#0066dd;"></div>
<div class="a" style="left:288px;top:454px;width:20px;height:106px;background:#3a6b30;"></div>
<div class="a" style="left:281px;top:444px;width:36px;height:20px;border:2px solid #3a6b30;"></div>
<div class="a" style="left:241px;top:575px;width:116px;height:25px;background:#424242;"></div>
<div class="a t" style="left:241px;top:576px;width:116px;height:25px;line-height:25px;font-size:14.5px;font-weight:normal;color:#bdbdbd;text-align:center;letter-spacing:0.5px;">Clear</div>
<div class="a" style="left:410px;top:411px;width:97px;height:8px;background:#1e1e1e;"></div>
<div class="a" style="left:449px;top:401px;width:20px;height:25px;border:2px solid #0066dd;"></div>
<div class="a" style="left:455px;top:454px;width:6px;height:106px;background:#0066dd;"></div>
<div class="a" style="left:441px;top:444px;width:36px;height:20px;border:2px solid #0066dd;"></div>
<div class="a" style="left:401px;top:575px;width:116px;height:25px;background:#424242;"></div>
<div class="a t" style="left:401px;top:576px;width:116px;height:25px;line-height:25px;font-size:14.5px;font-weight:normal;color:#bdbdbd;text-align:center;letter-spacing:0.5px;">Clear</div>
<div class="a" style="left:519px;top:428px;width:160px;height:29px;background:#68217a;"></div>
<div class="a t" style="left:519px;top:429px;width:160px;height:29px;line-height:29px;font-size:14.5px;font-weight:bold;color:#cdcdcd;text-align:center;letter-spacing:0.4px;">Quantize</div>
<div class="a" style="left:519px;top:486px;width:160px;height:29px;background:#68217a;"></div>
<div class="a t" style="left:519px;top:487px;width:160px;height:29px;line-height:29px;font-size:14.5px;font-weight:bold;color:#cdcdcd;text-align:center;letter-spacing:0.4px;">Step</div>
<div class="a" style="left:519px;top:544px;width:160px;height:29px;background:#68217a;"></div>
<div class="a t" style="left:519px;top:545px;width:160px;height:29px;line-height:29px;font-size:14.5px;font-weight:bold;color:#cdcdcd;text-align:center;letter-spacing:0.4px;">Pattern Time</div>
<div class="a" style="left:520px;top:400px;width:41px;height:27px;background:#2a5080;border:2px solid #0a6ee8;"></div>
<div class="a t" style="left:520px;top:400px;width:41px;height:27px;line-height:27px;font-size:14.5px;font-weight:normal;color:#c0c0c0;text-align:center;letter-spacing:0.5px;">Note</div>
<div class="a" style="left:561px;top:402px;width:37px;height:24px;background:#424242;"></div>
<div class="a t" style="left:561px;top:400px;width:37px;height:27px;line-height:27px;font-size:14.5px;font-weight:normal;color:#c0c0c0;text-align:center;letter-spacing:0.5px;">Off</div>
<div class="a" style="left:599px;top:402px;width:38px;height:24px;background:#424242;"></div>
<div class="a t" style="left:599px;top:400px;width:38px;height:27px;line-height:27px;font-size:14.5px;font-weight:normal;color:#c0c0c0;text-align:center;letter-spacing:0.5px;">Slide</div>
<div class="a" style="left:638px;top:402px;width:39px;height:24px;background:#424242;"></div>
<div class="a t" style="left:638px;top:400px;width:39px;height:27px;line-height:27px;font-size:14.5px;font-weight:normal;color:#c0c0c0;text-align:center;letter-spacing:0.5px;">Pitch</div>
<div class="a" style="left:520px;top:458px;width:41px;height:27px;background:#3c3c3c;border:2px solid #0a6ee8;"></div>
<div class="a t" style="left:520px;top:458px;width:41px;height:27px;line-height:27px;font-size:14.5px;font-weight:normal;color:#c0c0c0;text-align:center;letter-spacing:0.5px;">1</div>
<div class="a" style="left:561px;top:460px;width:37px;height:24px;background:#424242;"></div>
<div class="a t" style="left:561px;top:458px;width:37px;height:27px;line-height:27px;font-size:14.5px;font-weight:normal;color:#c0c0c0;text-align:center;letter-spacing:0.5px;">2</div>
<div class="a" style="left:599px;top:460px;width:38px;height:24px;background:#424242;"></div>
<div class="a t" style="left:599px;top:458px;width:38px;height:27px;line-height:27px;font-size:14.5px;font-weight:normal;color:#c0c0c0;text-align:center;letter-spacing:0.5px;">3</div>
<div class="a" style="left:638px;top:460px;width:39px;height:24px;background:#424242;"></div>
<div class="a t" style="left:638px;top:458px;width:39px;height:27px;line-height:27px;font-size:14.5px;font-weight:normal;color:#c0c0c0;text-align:center;letter-spacing:0.5px;">4</div>
<div class="a" style="left:520px;top:516px;width:41px;height:27px;background:#2a5080;border:2px solid #0a6ee8;"></div>
<div class="a t" style="left:520px;top:516px;width:41px;height:27px;line-height:27px;font-size:14.5px;font-weight:normal;color:#c0c0c0;text-align:center;letter-spacing:0.5px;">0</div>
<div class="a" style="left:561px;top:518px;width:37px;height:24px;background:#424242;"></div>
<div class="a t" style="left:561px;top:516px;width:37px;height:27px;line-height:27px;font-size:14.5px;font-weight:normal;color:#c0c0c0;text-align:center;letter-spacing:0.5px;">1</div>
<div class="a" style="left:599px;top:518px;width:38px;height:24px;background:#424242;"></div>
<div class="a t" style="left:599px;top:516px;width:38px;height:27px;line-height:27px;font-size:14.5px;font-weight:normal;color:#c0c0c0;text-align:center;letter-spacing:0.5px;">2</div>
<div class="a" style="left:638px;top:518px;width:39px;height:24px;background:#424242;"></div>
<div class="a t" style="left:638px;top:516px;width:39px;height:27px;line-height:27px;font-size:14.5px;font-weight:normal;color:#c0c0c0;text-align:center;letter-spacing:0.5px;">4</div>
<div class="a" style="left:521px;top:576px;width:38px;height:24px;background:#424242;"></div>
<div class="a t" style="left:521px;top:574px;width:38px;height:27px;line-height:27px;font-size:14.5px;font-weight:normal;color:#c0c0c0;text-align:center;letter-spacing:0.5px;">4:4</div>
<div class="a" style="left:559px;top:574px;width:41px;height:27px;background:#2a5080;border:2px solid #0a6ee8;"></div>
<div class="a t" style="left:559px;top:574px;width:41px;height:27px;line-height:27px;font-size:14.5px;font-weight:normal;color:#c0c0c0;text-align:center;letter-spacing:0.5px;">3:4</div>
<div class="a" style="left:600px;top:576px;width:37px;height:24px;background:#424242;"></div>
<div class="a t" style="left:600px;top:574px;width:37px;height:27px;line-height:27px;font-size:14.5px;font-weight:normal;color:#c0c0c0;text-align:center;letter-spacing:0.5px;">4:3</div>
<div class="a" style="left:638px;top:576px;width:39px;height:24px;background:#424242;"></div>
<div class="a t" style="left:638px;top:574px;width:39px;height:27px;line-height:27px;font-size:14.5px;font-weight:normal;color:#c0c0c0;text-align:center;letter-spacing:0.5px;">3:3</div>
<div class="a" style="left:721px;top:401px;width:76px;height:54px;background:#424242;"></div>
<div class="a t" style="left:719.5px;top:402px;width:76px;height:54px;line-height:54px;font-size:15.5px;font-weight:normal;color:#c0c0c0;text-align:center;">|&lt;</div>
<div class="a" style="left:801px;top:401px;width:76px;height:54px;background:#2d4f35;"></div>
<div class="a t" style="left:799px;top:402px;width:76px;height:54px;line-height:54px;font-size:14.5px;font-weight:normal;color:#c0c0c0;text-align:center;">Play</div>
<div class="a" style="left:881px;top:401px;width:76px;height:54px;background:#424242;"></div>
<div class="a t" style="left:879px;top:402px;width:76px;height:54px;line-height:54px;font-size:14.5px;font-weight:normal;color:#c0c0c0;text-align:center;">Rec</div>
<div class="a" style="left:731px;top:470px;width:171px;height:6px;background:#0066dd;"></div>
<div class="a" style="left:902px;top:470px;width:5px;height:6px;background:#222;"></div>
<div class="a" style="left:890px;top:459px;width:20px;height:25px;border:2px solid #0066dd;"></div>
<div class="a t" style="left:920px;top:460px;width:37px;height:25px;line-height:25px;font-size:14.5px;font-weight:normal;color:#c8c8c8;text-align:center;letter-spacing:0.5px;">62</div>
<div class="a" style="left:719px;top:544px;width:240px;height:29px;background:#1b2a52;"></div>
<div class="a t" style="left:719px;top:545px;width:240px;height:29px;line-height:29px;font-size:14.5px;font-weight:bold;color:#c8c8c8;text-align:center;letter-spacing:0.4px;">Help</div>
<svg class="a" style="left:0;top:600px" width="960" height="59" shape-rendering="crispEdges">
<rect x="244" y="7" width="470" height="48" fill="#e4e4d2"/>
<rect x="513" y="7" width="67" height="48" fill="#c8b890"/>
<rect x="254" y="7" width="1" height="48" fill="#3c3c38"/>
<rect x="263" y="7" width="1" height="48" fill="#3c3c38"/>
<rect x="273" y="7" width="1" height="48" fill="#3c3c38"/>
<rect x="282" y="7" width="1" height="48" fill="#3c3c38"/>
<rect x="292" y="7" width="1" height="48" fill="#3c3c38"/>
<rect x="302" y="7" width="1" height="48" fill="#3c3c38"/>
<rect x="311" y="7" width="1" height="48" fill="#3c3c38"/>
<rect x="321" y="7" width="1" height="48" fill="#3c3c38"/>
<rect x="330" y="7" width="1" height="48" fill="#3c3c38"/>
<rect x="340" y="7" width="1" height="48" fill="#3c3c38"/>
<rect x="350" y="7" width="1" height="48" fill="#3c3c38"/>
<rect x="359" y="7" width="1" height="48" fill="#3c3c38"/>
<rect x="369" y="7" width="1" height="48" fill="#3c3c38"/>
<rect x="378" y="7" width="1" height="48" fill="#3c3c38"/>
<rect x="388" y="7" width="1" height="48" fill="#3c3c38"/>
<rect x="397" y="7" width="1" height="48" fill="#3c3c38"/>
<rect x="407" y="7" width="1" height="48" fill="#3c3c38"/>
<rect x="417" y="7" width="1" height="48" fill="#3c3c38"/>
<rect x="426" y="7" width="1" height="48" fill="#3c3c38"/>
<rect x="436" y="7" width="1" height="48" fill="#3c3c38"/>
<rect x="445" y="7" width="1" height="48" fill="#3c3c38"/>
<rect x="455" y="7" width="1" height="48" fill="#3c3c38"/>
<rect x="465" y="7" width="1" height="48" fill="#3c3c38"/>
<rect x="474" y="7" width="1" height="48" fill="#3c3c38"/>
<rect x="484" y="7" width="1" height="48" fill="#3c3c38"/>
<rect x="493" y="7" width="1" height="48" fill="#3c3c38"/>
<rect x="503" y="7" width="1" height="48" fill="#3c3c38"/>
<rect x="513" y="7" width="1" height="48" fill="#3c3c38"/>
<rect x="522" y="7" width="1" height="48" fill="#3c3c38"/>
<rect x="532" y="7" width="1" height="48" fill="#3c3c38"/>
<rect x="541" y="7" width="1" height="48" fill="#3c3c38"/>
<rect x="551" y="7" width="1" height="48" fill="#3c3c38"/>
<rect x="561" y="7" width="1" height="48" fill="#3c3c38"/>
<rect x="570" y="7" width="1" height="48" fill="#3c3c38"/>
<rect x="580" y="7" width="1" height="48" fill="#3c3c38"/>
<rect x="589" y="7" width="1" height="48" fill="#3c3c38"/>
<rect x="599" y="7" width="1" height="48" fill="#3c3c38"/>
<rect x="608" y="7" width="1" height="48" fill="#3c3c38"/>
<rect x="618" y="7" width="1" height="48" fill="#3c3c38"/>
<rect x="628" y="7" width="1" height="48" fill="#3c3c38"/>
<rect x="637" y="7" width="1" height="48" fill="#3c3c38"/>
<rect x="647" y="7" width="1" height="48" fill="#3c3c38"/>
<rect x="656" y="7" width="1" height="48" fill="#3c3c38"/>
<rect x="666" y="7" width="1" height="48" fill="#3c3c38"/>
<rect x="676" y="7" width="1" height="48" fill="#3c3c38"/>
<rect x="685" y="7" width="1" height="48" fill="#3c3c38"/>
<rect x="695" y="7" width="1" height="48" fill="#3c3c38"/>
<rect x="704" y="7" width="1" height="48" fill="#3c3c38"/>
<rect x="251" y="7" width="7" height="30" fill="#000"/>
<rect x="261" y="7" width="6" height="30" fill="#000"/>
<rect x="280" y="7" width="6" height="30" fill="#000"/>
<rect x="289" y="7" width="7" height="30" fill="#000"/>
<rect x="299" y="7" width="7" height="30" fill="#000"/>
<rect x="318" y="7" width="7" height="30" fill="#000"/>
<rect x="328" y="7" width="6" height="30" fill="#000"/>
<rect x="347" y="7" width="7" height="30" fill="#000"/>
<rect x="356" y="7" width="7" height="30" fill="#000"/>
<rect x="366" y="7" width="7" height="30" fill="#000"/>
<rect x="385" y="7" width="7" height="30" fill="#000"/>
<rect x="395" y="7" width="7" height="30" fill="#000"/>
<rect x="414" y="7" width="7" height="30" fill="#000"/>
<rect x="424" y="7" width="6" height="30" fill="#000"/>
<rect x="433" y="7" width="7" height="30" fill="#000"/>
<rect x="453" y="7" width="6" height="30" fill="#000"/>
<rect x="462" y="7" width="7" height="30" fill="#000"/>
<rect x="482" y="7" width="6" height="30" fill="#000"/>
<rect x="491" y="7" width="6" height="30" fill="#000"/>
<rect x="501" y="7" width="6" height="30" fill="#000"/>
<rect x="520" y="7" width="6" height="30" fill="#000"/>
<rect x="529" y="7" width="7" height="30" fill="#000"/>
<rect x="549" y="7" width="6" height="30" fill="#000"/>
<rect x="558" y="7" width="6" height="30" fill="#000"/>
<rect x="568" y="7" width="6" height="30" fill="#000"/>
<rect x="587" y="7" width="6" height="30" fill="#000"/>
<rect x="597" y="7" width="6" height="30" fill="#000"/>
<rect x="616" y="7" width="6" height="30" fill="#000"/>
<rect x="625" y="7" width="6" height="30" fill="#000"/>
<rect x="635" y="7" width="6" height="30" fill="#000"/>
<rect x="654" y="7" width="6" height="30" fill="#000"/>
<rect x="664" y="7" width="6" height="30" fill="#000"/>
<rect x="683" y="7" width="6" height="30" fill="#000"/>
<rect x="692" y="7" width="7" height="30" fill="#000"/>
<rect x="702" y="7" width="6" height="30" fill="#000"/>
</svg>
</div></body></html>
